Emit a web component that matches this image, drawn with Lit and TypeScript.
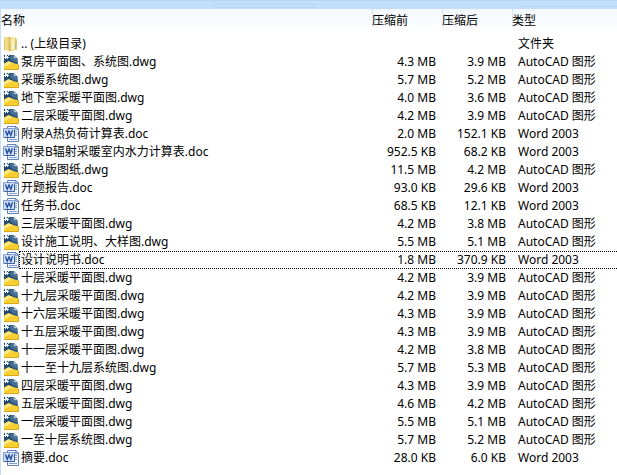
import { LitElement, html, css } from "lit";
import { customElement, property } from "lit/decorators.js";

type Kind = "folder" | "dwg" | "doc";
interface Entry {
  name: string;
  before: string;
  after: string;
  kind: Kind;
  focused?: boolean;
}

const TYPE_LABEL: Record<Kind, string> = {
  folder: "文件夹",
  dwg: "AutoCAD 图形",
  doc: "Word 2003",
};

const ENTRIES: Entry[] = [
  { name: ".. (上级目录)", before: "", after: "", kind: "folder" },
  { name: "泵房平面图、系统图.dwg", before: "4.3 MB", after: "3.9 MB", kind: "dwg" },
  { name: "采暖系统图.dwg", before: "5.7 MB", after: "5.2 MB", kind: "dwg" },
  { name: "地下室采暖平面图.dwg", before: "4.0 MB", after: "3.6 MB", kind: "dwg" },
  { name: "二层采暖平面图.dwg", before: "4.2 MB", after: "3.9 MB", kind: "dwg" },
  { name: "附录A热负荷计算表.doc", before: "2.0 MB", after: "152.1 KB", kind: "doc" },
  { name: "附录B辐射采暖室内水力计算表.doc", before: "952.5 KB", after: "68.2 KB", kind: "doc" },
  { name: "汇总版图纸.dwg", before: "11.5 MB", after: "4.2 MB", kind: "dwg" },
  { name: "开题报告.doc", before: "93.0 KB", after: "29.6 KB", kind: "doc" },
  { name: "任务书.doc", before: "68.5 KB", after: "12.1 KB", kind: "doc" },
  { name: "三层采暖平面图.dwg", before: "4.2 MB", after: "3.8 MB", kind: "dwg" },
  { name: "设计施工说明、大样图.dwg", before: "5.5 MB", after: "5.1 MB", kind: "dwg" },
  { name: "设计说明书.doc", before: "1.8 MB", after: "370.9 KB", kind: "doc", focused: true },
  { name: "十层采暖平面图.dwg", before: "4.2 MB", after: "3.9 MB", kind: "dwg" },
  { name: "十九层采暖平面图.dwg", before: "4.2 MB", after: "3.9 MB", kind: "dwg" },
  { name: "十六层采暖平面图.dwg", before: "4.3 MB", after: "3.9 MB", kind: "dwg" },
  { name: "十五层采暖平面图.dwg", before: "4.3 MB", after: "3.9 MB", kind: "dwg" },
  { name: "十一层采暖平面图.dwg", before: "4.2 MB", after: "3.8 MB", kind: "dwg" },
  { name: "十一至十九层系统图.dwg", before: "5.7 MB", after: "5.3 MB", kind: "dwg" },
  { name: "四层采暖平面图.dwg", before: "4.3 MB", after: "3.9 MB", kind: "dwg" },
  { name: "五层采暖平面图.dwg", before: "4.6 MB", after: "4.2 MB", kind: "dwg" },
  { name: "一层采暖平面图.dwg", before: "5.5 MB", after: "5.1 MB", kind: "dwg" },
  { name: "一至十层系统图.dwg", before: "5.7 MB", after: "5.2 MB", kind: "dwg" },
  { name: "摘要.doc", before: "28.0 KB", after: "6.0 KB", kind: "doc" },
];

@customElement("file-icon")
export class FileIcon extends LitElement {
  @property() kind: Kind = "dwg";

  static styles = css`
    :host { display: block; width: 16px; height: 16px; }
    svg { display: block; }
  `;

  render() {
    if (this.kind === "folder") {
      return html`<svg width="16" height="16" viewBox="0 0 16 16" aria-hidden="true">
        <path d="M1 1.500 6 .5 8 1.500V15L1 14z" fill="#f0dd8c"/>
        <path d="M1 1.500v12.500l1 .2V1.300z" fill="#e2c968"/>
        <path d="M5.500.7 8 1.500V15.500L5.500 15z" fill="#dcc05c"/>
        <path d="M7.500 2 12 1 13.500 2.500v11.500L8 15.500z" fill="#f2e29a"/>
        <path d="M8.500 4 11 3v9.500L8.500 14z" fill="#fbf3c4"/>
        <path d="M12 2.500 14 3.500V13.500L12 14z" fill="#dcc468"/>
        <path d="M12 9h1v3h-1z" fill="#8fbbd6"/>
      </svg>`;
    }
    if (this.kind === "doc") {
      return html`<svg width="16" height="16" viewBox="0 0 16 16" aria-hidden="true">
        <path d="M4.500.5H13L15.500 3v12.500h-11z" fill="#f4f8ff" stroke="#6482b8"/>
        <path d="M12.500.5V3.500h3z" fill="#a9c0e6" stroke="#5874a8" stroke-width=".6"/>
        <path d="M12 5.500h2M12 7.500h2M12 9.500h2M6 13.500h8" stroke="#7f9ed4"/>
        <path d="M.5 2.500h11v9H.5z" fill="#d3e0f6" stroke="#7d9ad0"/>
        <path d="M1.500 11.500h10V4" fill="none" stroke="#3d5f9f"/>
        <path d="M2.500 4.500 4.200 9.300 6 5 7.800 9.300 9.500 4.200" fill="none" stroke="#2450a4" stroke-width="1.400"/>
      </svg>`;
    }
    return html`<svg width="16" height="16" viewBox="0 0 16 16" aria-hidden="true">
      <path d="M1 1H11L14.500 4.500 15 13H1z" fill="#244a72"/>
      <path d="M7 1.500h3.500L13.500 4.500 14.500 9 10 7.500 7 5z" fill="#466f97"/>
      <path d="M10.500.8 14.500 4.500 11 4z" fill="#b3cadc"/>
      <path d="M1 9.500 5.500 7 9 8.500 15.500 10.500V15.500H1z" fill="#f8cf30"/>
      <path d="M1.500 10 5.500 7.500 9.500 9 1.500 13z" fill="#ffe98a"/>
      <path d="M1 15.500H15.500V10.500" fill="none" stroke="#d9a61c"/>
      <path d="M0 0h2v1h1v1H2V1H1v1H0zM3 0h1v2h1V1h1v1H5v1h1v1H5v1H4V4H3v1H2V4H1V3h1V2h1z" fill="#eaf3fa"/>
    </svg>`;
  }
}

@customElement("app-root")
export class AppRoot extends LitElement {
  static styles = css`
    :host {
      display: block;
      min-height: 100vh;
      background: #fff;
      color: #000;
      font: 12px/18px "Noto Sans", "Noto Sans CJK SC", sans-serif;
    }
    .toolbar {
      box-sizing: border-box;
      display: grid;
      grid-template-columns: 215fr 101fr 202fr 99fr;
      align-items: end;
      height: 9px;
      padding-bottom: 1px;
      border-top: 1px solid #b8d5f3;
      background: #c3defa;
    }
    .grip { grid-column: 2; height: 2px; border-top: 1px solid #b6d3f1; border-bottom: 1px solid #b6d3f1; }
    .edge { grid-column: 4; height: 1px; border-top: 1px solid #b6d3f1; }
    .panel {
      box-sizing: border-box;
      min-height: calc(100vh - 9px);
      border-left: 1px solid #c3defa;
    }
    table { width: 100%; border-collapse: separate; border-spacing: 0; table-layout: fixed; }
    .size { width: 70px; }
    .type { width: 105px; }
    th {
      height: 23px;
      padding: 0;
      font-weight: 400;
      text-align: left;
      background: linear-gradient(#f2f8fe, #fff);
    }
    th + th {
      background:
        linear-gradient(#c9e1f8, #fff) left / 1px 100% no-repeat,
        linear-gradient(#f2f8fe, #fff);
    }
    .gap { height: 3px; padding: 0; }
    td { height: 18px; padding: 0; white-space: nowrap; box-sizing: border-box; }
    .name { display: flex; align-items: center; height: 18px; padding-left: 2px; }
    .label { flex: 1; height: 18px; box-sizing: border-box; padding-left: 2px; }
    .num { text-align: right; padding-right: 6px; }
    .kind { padding-left: 6px; }
    .focused .label, .focused .num, .focused .kind {
      background:
        repeating-linear-gradient(90deg, #000 0 1px, transparent 1px 2px) top / 100% 1px no-repeat,
        repeating-linear-gradient(90deg, #000 0 1px, transparent 1px 2px) bottom / 100% 1px no-repeat;
    }
    .focused .label { border-left: 1px dotted #000; padding-left: 1px; }
  `;

  render() {
    return html`
      <div class="toolbar"><span class="grip"></span><span class="edge"></span></div>
      <main class="panel">
        <table>
          <colgroup><col /><col class="size" /><col class="size" /><col class="type" /></colgroup>
          <thead>
            <tr>
              <th scope="col">名称</th><th scope="col">压缩前</th><th scope="col">压缩后</th><th scope="col">类型</th>
            </tr>
          </thead>
          <tbody>
            <tr><td class="gap" colspan="4"></td></tr>
            ${ENTRIES.map((e) => html`
              <tr class=${e.focused ? "focused" : ""}>
                <td><div class="name"><file-icon .kind=${e.kind}></file-icon><span class="label">${e.name}</span></div></td>
                <td class="num">${e.before}</td>
                <td class="num">${e.after}</td>
                <td class="kind">${TYPE_LABEL[e.kind]}</td>
              </tr>`)}
          </tbody>
        </table>
      </main>
    `;
  }
}
